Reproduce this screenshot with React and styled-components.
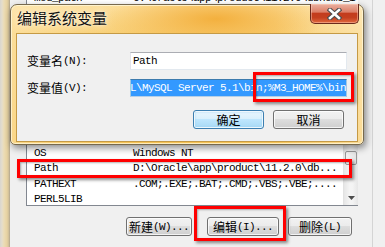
import React from "react";
import styled, { createGlobalStyle, css } from "styled-components";

const GlobalStyle = createGlobalStyle`
  html, body { margin: 0; padding: 0; background: #f0f0f0; }
  body { width: 385px; height: 247px; overflow: hidden; }
`;

const Desktop = styled.div`
  position: relative;
  width: 385px;
  height: 247px;
  overflow: hidden;
  background: #f0f0f0;
  font-family: "Noto Sans CJK SC", sans-serif;
  font-size: 12px;
  color: #000;
`;

const Mono = styled.span`
  font-family: "Liberation Mono", monospace;
  font-size: 11px;
  letter-spacing: -0.6px;
  white-space: pre;
  color: #000;
`;

/* ---------- background window (环境变量) ---------- */
const BgWindow = styled.div`
  position: absolute;
  inset: 0;
  display: flex;
`;

const BgFrameLeft = styled.div`
  width: 10px;
  flex-shrink: 0;
  background: linear-gradient(
    90deg,
    #d8d5ce 0,
    #e4ddcc 2px,
    #ecdcb4 4px,
    #e6d2a2 7px,
    #cdbd98 9px,
    #aaa08c 10px
  );
`;

const BgClient = styled.div`
  flex: 1;
  display: flex;
  flex-direction: column;
  padding-left: 16px;
`;

const BgFrameRight = styled.div`
  width: 12px;
  flex-shrink: 0;
  border-left: 1px solid #d4d4d4;
  background: #f0f0f0;
`;

const ListTail = styled.div`
  width: 332px;
  height: 5px;
  box-sizing: border-box;
  background: #fff;
  overflow: hidden;
  border-left: 1px solid #828790;
`;

const TailRow = styled.div`
  display: grid;
  grid-template-columns: 99px 1fr;
  padding-left: 7px;
  margin-top: -9px;
  height: 14px;
  line-height: 14px;
`;

const SysList = styled.div`
  margin-top: 140px;
  width: 332px;
  height: 61px;
  box-sizing: border-box;
  border-left: 1px solid #828790;
  border-bottom: 1px solid #828790;
  background: #fff;
  display: flex;
`;

const Rows = styled.div`
  flex: 1;
  overflow: hidden;
  padding-top: 0.6px;
`;

const Row = styled.div`
  display: grid;
  grid-template-columns: 99px 1fr;
  padding-left: 7px;
  height: 15.6px;
  line-height: 15.6px;
`;

const ScrollBar = styled.div`
  width: 15px;
  display: flex;
  flex-direction: column;
  justify-content: space-between;
  background: linear-gradient(90deg, #e6e6e6 0, #f4f4f4 40%, #f4f4f4 60%, #e6e6e6 100%);
  border-left: 1px solid #e2e2e2;
  box-sizing: border-box;
`;

const Thumb = styled.div`
  margin: 6px 1px 0 1px;
  height: 14px;
  box-sizing: border-box;
  border: 1px solid #979797;
  border-radius: 2px;
  background: linear-gradient(90deg, #f3f3f3, #e4e4e4);
`;

const ArrowBtn = styled.div`
  height: 15px;
  display: flex;
  align-items: center;
  justify-content: center;
`;

const BgButtons = styled.div`
  margin-top: 11px;
  display: flex;
  padding-left: 100px;
`;

const Btn = styled.div`
  box-sizing: border-box;
  height: 19px;
  width: ${(p) => p.$w}px;
  margin-left: ${(p) => p.$ml || 0}px;
  border: 1px solid #707070;
  border-radius: 3px;
  background: linear-gradient(180deg, #f2f2f2 0%, #ebebeb 49%, #dddddd 50%, #cfcfcf 100%);
  box-shadow: inset 0 0 0 1px rgba(255, 255, 255, 0.75);
  display: flex;
  align-items: center;
  justify-content: center;
  line-height: 16px;
  ${(p) =>
    p.$default &&
    css`
      border-color: #3c7fb1;
      background: linear-gradient(180deg, #eaf6fd 0%, #d9f0fc 49%, #bee6fd 50%, #a7d9f5 100%);
      box-shadow: inset 0 0 0 1px rgba(255, 255, 255, 0.8), inset 0 0 2px 1px #9fd4f3;
    `}
`;

/* ---------- dialog (编辑系统变量) ---------- */
const Dialog = styled.div`
  position: absolute;
  left: 10px;
  top: 4px;
  width: 354px;
  height: 141px;
  box-sizing: border-box;
  border: 1px solid #77694d;
  border-radius: 7px 7px 5px 5px;
  padding: 0 5px 2px 5px;
  display: flex;
  flex-direction: column;
  background:
    radial-gradient(ellipse 110px 30px at 205px 14px, rgba(243, 174, 58, 0.95) 0%, rgba(243, 174, 58, 0) 100%),
    linear-gradient(90deg, rgba(255, 236, 190, 0.5) 0%, rgba(255, 236, 190, 0) 30%, rgba(255, 236, 190, 0) 75%, rgba(255, 240, 205, 0.55) 100%),
    linear-gradient(180deg, #fcdf9c 0, #f8cf76 28px, #f5c256 100%);
  box-shadow: 2px 3px 7px rgba(0, 0, 0, 0.45), inset 0 0 0 1px rgba(255, 248, 220, 0.75);
`;

const TitleBar = styled.div`
  height: 28px;
  flex-shrink: 0;
  display: flex;
  justify-content: space-between;
  align-items: flex-start;
`;

const Title = styled.div`
  padding: 3px 0 0 1px;
  font-size: 15px;
  line-height: 20px;
  color: #111;
  text-shadow: 0 0 6px rgba(255, 255, 255, 0.85), 0 0 2px rgba(255, 255, 255, 0.7);
`;

const CloseBtn = styled.div`
  width: 49px;
  height: 20px;
  margin: -1px -1px 0 0;
  box-sizing: border-box;
  border: 1px solid #6b2a1c;
  border-top: none;
  border-radius: 0 0 5px 5px;
  background: linear-gradient(180deg, #eab0a0 0%, #dc8068 42%, #c33c1d 50%, #c4401f 72%, #e26a3f 100%);
  box-shadow: inset 0 0 0 1px rgba(255, 210, 190, 0.45);
  display: flex;
  align-items: center;
  justify-content: center;
`;

const Client = styled.div`
  flex: 1;
  border: 1px solid #c59a45;
  background: #f0f0f0;
  padding: 18px 13px 0 10px;
`;

const Form = styled.div`
  display: grid;
  grid-template-columns: 103px 217px;
  grid-auto-rows: 18px;
  row-gap: 9px;
  align-items: center;
`;

const Label = styled.div`
  height: 18px;
  line-height: 18px;
  white-space: nowrap;
  display: flex;
  align-items: center;
`;

const TextBox = styled.div`
  height: 18px;
  box-sizing: border-box;
  border: 1px solid;
  border-color: #abadb3 #e3e9ef #e3e9ef #e2e3ea;
  background: #fff;
  padding-left: 2px;
  display: flex;
  align-items: center;
  overflow: hidden;
  ${(p) =>
    p.$focused &&
    css`
      border-color: #3d7bad #a4c9e3 #b5cfe7 #a4c9e3;
      padding-left: 0;
      justify-content: flex-end;
    `}
`;

const Selected = styled(Mono)`
  flex-shrink: 0;
  background: #3399ff;
  color: #fff;
  line-height: 16px;
`;

const DialogButtons = styled.div`
  margin-top: 13px;
  display: flex;
  justify-content: flex-end;
  gap: 9px;
`;

/* ---------- annotations ---------- */
const Mark = styled.div`
  position: absolute;
  box-sizing: border-box;
  border: 3px solid #ff0000;
  box-shadow: 2px 2px 3px rgba(0, 0, 0, 0.45), inset 1px 1px 2px rgba(0, 0, 0, 0.3);
`;

const marks = [
  { left: 253, top: 72, width: 101, height: 30 },
  { left: 17, top: 159, width: 335, height: 19 },
  { left: 194, top: 206, width: 92, height: 35 },
];

const rows = [
  ["OS", "Windows NT"],
  ["Path", "D:\\Oracle\\app\\product\\11.2.0\\db..."],
  ["PATHEXT", ".COM;.EXE;.BAT;.CMD;.VBS;.VBE;...."],
  ["PERL5LIB", ""],
];

const CloseGlyph = () => (
  <svg width="15" height="12" viewBox="0 0 15 12">
    <g strokeLinecap="square">
      <path d="M3 2 L12 10 M12 2 L3 10" stroke="#4d4d4d" strokeWidth="4.6" />
      <path d="M3 2 L12 10 M12 2 L3 10" stroke="#ffffff" strokeWidth="2.6" />
    </g>
  </svg>
);

const DownArrow = () => (
  <svg width="7" height="4" viewBox="0 0 7 4">
    <path d="M0 0 H7 L3.5 4 Z" fill="#4d4d4d" />
  </svg>
);

export default function App() {
  return (
    <>
      <GlobalStyle />
      <Desktop>
        <BgWindow>
          <BgFrameLeft />
          <BgClient>
            <ListTail>
              <TailRow>
                <Mono>mod_path</Mono>
                <Mono>C:\Oracle\app\product\11.2.0\dbhome_1\bin;C:</Mono>
              </TailRow>
            </ListTail>
            <SysList>
              <Rows>
                {rows.map(([name, value]) => (
                  <Row key={name}>
                    <Mono>{name}</Mono>
                    <Mono>{value}</Mono>
                  </Row>
                ))}
              </Rows>
              <ScrollBar>
                <Thumb />
                <ArrowBtn>
                  <DownArrow />
                </ArrowBtn>
              </ScrollBar>
            </SysList>
            <BgButtons>
              <Btn $w={66}>
                新建<Mono>(W)...</Mono>
              </Btn>
              <Btn $w={72} $ml={15}>
                编辑<Mono>(I)...</Mono>
              </Btn>
              <Btn $w={64} $ml={9}>
                删除<Mono>(L)</Mono>
              </Btn>
            </BgButtons>
          </BgClient>
          <BgFrameRight />
        </BgWindow>

        <Dialog>
          <TitleBar>
            <Title>编辑系统变量</Title>
            <CloseBtn>
              <CloseGlyph />
            </CloseBtn>
          </TitleBar>
          <Client>
            <Form>
              <Label>
                变量名<Mono>(N):</Mono>
              </Label>
              <TextBox>
                <Mono>Path</Mono>
              </TextBox>
              <Label>
                变量值<Mono>(V):</Mono>
              </Label>
              <TextBox $focused>
                <Selected>C:\Program Files\MySQL\MySQL Server 5.1\bin;%M3_HOME%\bin</Selected>
              </TextBox>
            </Form>
            <DialogButtons>
              <Btn $w={71} $default>
                确定
              </Btn>
              <Btn $w={71}>取消</Btn>
            </DialogButtons>
          </Client>
        </Dialog>

        {marks.map((m, i) => (
          <Mark key={i} style={m} />
        ))}
      </Desktop>
    </>
  );
}
